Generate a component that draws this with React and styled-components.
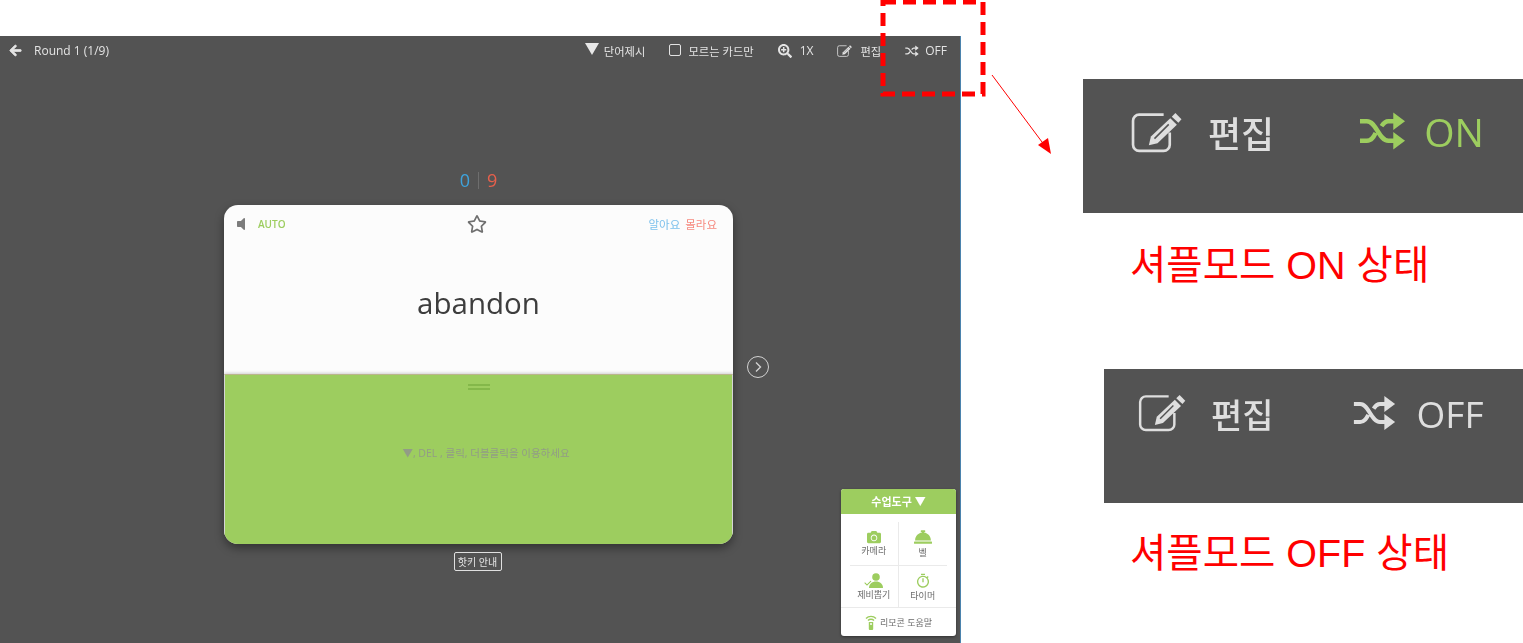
import styled, { createGlobalStyle } from "styled-components";
import { FaArrowLeft, FaCamera, FaConciergeBell, FaRegStar, FaSearchPlus, FaVolumeOff } from "react-icons/fa";
import { MdOutlineTimer } from "react-icons/md";

const GlobalStyle = createGlobalStyle`
  html, body {
    margin: 0;
    padding: 0;
    background: #fff;
  }
  body {
    font-family: "Open Sans", "Noto Sans CJK KR", sans-serif;
  }
`
const Page = styled.div`
  position: relative;
  display: flex;
  width: 1523px;
  height: 643px;
  overflow: hidden;
`
const Screen = styled.div`
  position: relative;
  box-sizing: border-box;
  width: 961px;
  height: 607px;
  margin-top: 36px;
  background: #535353;
  border-right: 1px solid #4b83ad;
  flex-shrink: 0;
  filter: blur(0.3px);
`
const Toolbar = styled.div`
  display: flex;
  justify-content: space-between;
  align-items: center;
  height: 29px;
  padding: 0 13px 0 9px;
  color: #e4e4e4;
  font-size: 12px;
`
const ToolGroup = styled.div`
  display: flex;
  align-items: center;
  gap: ${props => props.$gap}px;
`
const ToolItem = styled.div`
  display: flex;
  align-items: center;
  gap: ${props => props.$gap || 8}px;
  white-space: nowrap;
`
const KoreanLabel = styled.span`
  font-size: 11.3px;
`
const BackIcon = styled(FaArrowLeft)`
  stroke: currentColor;
  stroke-width: 30px;
`
const Triangle = styled.span`
  width: 0;
  height: 0;
  margin-top: -3px;
  border-left: 7px solid transparent;
  border-right: 7px solid transparent;
  border-top: 12px solid #e8e8e8;
`
const CheckBox = styled.span`
  box-sizing: border-box;
  width: 12px;
  height: 12px;
  margin-top: -2px;
  border: 1px solid #e4e4e4;
  border-radius: 2px;
`
const Stage = styled.div`
  display: flex;
  align-items: flex-start;
  gap: 14px;
  padding: 103px 0 0 224px;
`
const CardColumn = styled.div`
  display: flex;
  flex-direction: column;
  align-items: center;
  width: 509px;
`
const Score = styled.div`
  display: flex;
  align-items: center;
  justify-content: center;
  gap: 8px;
  height: 24px;
  margin-bottom: 13px;
  font-size: 18px;
`
const ScoreNum = styled.span`
  color: ${props => props.$color};
`
const ScoreBar = styled.span`
  width: 1px;
  height: 17px;
  background: #6e6e6e;
`
const Card = styled.div`
  width: 100%;
  height: 339px;
  border-radius: 14px;
  overflow: hidden;
  background: #fcfcfc;
  box-shadow: 0 4px 10px rgba(0, 0, 0, 0.4);
`
const CardTop = styled.div`
  height: 169px;
  padding: 0 16px;
  box-sizing: border-box;
`
const CardHeader = styled.div`
  display: grid;
  grid-template-columns: 1fr auto 1fr;
  align-items: center;
  height: 38px;
`
const HeaderLeft = styled.div`
  display: flex;
  align-items: center;
  gap: 9px;
  margin-left: -7px;
  color: #7c7c7c;
  font-size: 15px;
`
const Auto = styled.span`
  color: #9dcd5f;
  font-size: 10px;
  font-weight: 600;
`
const StarWrap = styled.div`
  display: flex;
  margin-right: 3px;
  color: #6f6f6f;
  font-size: 20px;
`
const Answers = styled.div`
  display: flex;
  justify-content: flex-end;
  gap: 5px;
  font-size: 11.5px;
`
const Answer = styled.span`
  color: ${props => props.$color};
`
const Word = styled.div`
  margin-top: 41px;
  text-align: center;
  color: #3d3d3d;
  font-size: 29.5px;
  line-height: 38px;
`
const CardBottom = styled.div`
  box-sizing: border-box;
  display: flex;
  flex-direction: column;
  align-items: center;
  height: 170px;
  padding-top: 9px;
  background: #9dcd5f;
  border: 1px solid #d5d5d5;
  border-width: 1px 1px 0;
  border-top-color: #bbb58c;
  box-shadow: 0 -1px 3px rgba(0, 0, 0, 0.18);
  position: relative;
`
const Handle = styled.div`
  width: 22px;
  height: 2px;
  border-top: 2px solid #84b84a;
  border-bottom: 2px solid #84b84a;
  margin-bottom: 56px;
`
const HintText = styled.div`
  margin-left: 15px;
  color: #929c86;
  font-size: 10.5px;
  line-height: 14px;
`
const HotkeyButton = styled.button`
  box-sizing: border-box;
  height: 19px;
  width: 48px;
  margin: 8px 2px 0 0;
  padding: 0;
  font: inherit;
  font-size: 10px;
  color: #e6e6e6;
  background: #535353;
  border: 1px solid #e0e0e0;
  border-radius: 2px;
`
const NextButton = styled.div`
  box-sizing: border-box;
  display: flex;
  align-items: center;
  justify-content: center;
  width: 22px;
  height: 22px;
  margin-top: 188px;
  border: 1px solid #d2d2d2;
  border-radius: 50%;
`
const Toolbox = styled.div`
  position: absolute;
  right: 4px;
  bottom: 7px;
  width: 115px;
  height: 147px;
  background: #fff;
  border-radius: 3px;
  overflow: hidden;
  box-shadow: 0 1px 3px rgba(0, 0, 0, 0.4);
`
const ToolboxTitle = styled.div`
  height: 25px;
  line-height: 25px;
  text-align: center;
  color: #fff;
  background: #9dcd5f;
  font-size: 11px;
  font-weight: 700;
`
const ToolboxGrid = styled.div`
  display: grid;
  grid-template-columns: 1fr 1fr;
  grid-template-rows: 44px 42px;
  margin: 8px 9px 0;
  height: 85px;
`
const ToolCell = styled.div`
  display: flex;
  flex-direction: column;
  align-items: center;
  justify-content: center;
  gap: 1px;
  color: #6b6b6b;
  font-size: 9px;
  line-height: 12px;
  border-right: ${props => props.$right ? "1px solid #eaeaea" : "none"};
  border-bottom: ${props => props.$bottom ? "1px solid #eaeaea" : "none"};
  svg {
    color: #9dcd5f;
  }
`
const ToolboxFooter = styled.div`
  display: flex;
  align-items: center;
  justify-content: center;
  gap: 3px;
  height: 29px;
  border-top: 1px solid #eaeaea;
  color: #6b6b6b;
  font-size: 9px;
`
const Side = styled.div`
  display: flex;
  flex-direction: column;
  flex: 1;
`
const Shot = styled.div`
  box-sizing: border-box;
  display: flex;
  align-items: flex-start;
  height: 134px;
  margin-top: ${props => props.$top}px;
  margin-left: ${props => props.$left}px;
  padding: ${props => props.$pad};
  background: #535353;
  color: #dedede;
  filter: blur(0.6px);
`
const ShotItem = styled.div`
  display: flex;
  align-items: center;
  gap: ${props => props.$gap}px;
  margin-right: ${props => props.$space}px;
  color: ${props => props.$color || "#dedede"};
  font-size: ${props => props.$size}px;
  font-weight: ${props => props.$weight || 400};
  line-height: 1;
`
const ShotLabel = styled.span`
  margin-top: ${props => props.$drop}px;
`
const Note = styled.div`
  margin-top: ${props => props.$top}px;
  margin-left: ${props => props.$left}px;
  color: #ff0000;
  font-family: "Liberation Sans", "Noto Sans CJK KR", sans-serif;
  font-size: 39.5px;
  line-height: 50px;
  white-space: nowrap;
`
const DashedBox = styled.svg`
  position: absolute;
  left: 880px;
  top: 0;
`
const Pointer = styled.svg`
  position: absolute;
  left: 985px;
  top: 70px;
`

const EditIcon = ({width, height}) => (
    <svg width={width} height={height} viewBox="0 0 50 40" fill="none">
        <path d="M32 2.500H8a6 6 0 0 0-6 6V32a6 6 0 0 0 6 6h24a6 6 0 0 0 6-6V20" stroke="currentColor" strokeWidth="2.600"/>
        <path d="M43.500 1l6 6-3 3.500-6.500-6z" fill="currentColor"/>
        <path d="M38.500 6l6.500 6.500-19 18-8.500 2 2-8.500z" fill="currentColor"/>
        <path d="M37 12L23 26" stroke="#535353" strokeWidth="1.500"/>
    </svg>
)

const ShuffleIcon = ({width, height}) => (
    <svg width={width} height={height} viewBox="0 0 48 40" fill="none">
        <path d="M1 10h7c10 0 12 20 22 20h6M1 30h7c5 0 7-4 9-8M23 15c2-3 4-5 7-5h6" stroke="currentColor" strokeWidth="4.500"/>
        <path d="M35 1l12 9-12 9zM35 21l12 9-12 9z" fill="currentColor"/>
    </svg>
)

const RemoteIcon = () => (
    <svg width="12" height="15" viewBox="0 0 12 15" fill="none">
        <path d="M1 3.500a7 7 0 0 1 10 0" stroke="#9dcd5f" strokeWidth="1.400"/>
        <path d="M3 5.500a4.200 4.200 0 0 1 6 0" stroke="#9dcd5f" strokeWidth="1.400"/>
        <path d="M3.800 7h4.400v7a1 1 0 0 1-1 1H4.800a1 1 0 0 1-1-1z" fill="#9dcd5f"/>
        <circle cx="6" cy="9" r="1" fill="#fff"/>
    </svg>
)

const PickIcon = () => (
    <svg width="20" height="15" viewBox="0 0 20 15" fill="#9dcd5f">
        <circle cx="12" cy="4" r="3.800"/>
        <path d="M5 15c0-4 3-6.500 7-6.500s7 2.500 7 6.500z"/>
        <path d="M0 10l1-1 2 2 3.500-3.500 1 1L3 13z" stroke="#fff" strokeWidth="0.500"/>
    </svg>
)

const App = () => {
    return (
        <Page>
            <GlobalStyle/>
            <Screen>
                <Toolbar>
                    <ToolItem $gap={12}>
                        <BackIcon size={13}/>
                        <span>Round 1 (1/9)</span>
                    </ToolItem>
                    <ToolGroup $gap={24}>
                        <ToolItem $gap={5}><Triangle/><KoreanLabel>단어제시</KoreanLabel></ToolItem>
                        <ToolItem $gap={7}><CheckBox/><KoreanLabel>모르는 카드만</KoreanLabel></ToolItem>
                        <ToolItem><FaSearchPlus size={14}/><span>1X</span></ToolItem>
                        <ToolItem $gap={8}><EditIcon width={15} height={12}/><KoreanLabel>편집</KoreanLabel></ToolItem>
                        <ToolItem $gap={6}><ShuffleIcon width={14} height={12}/><span>OFF</span></ToolItem>
                    </ToolGroup>
                </Toolbar>
                <Stage>
                    <CardColumn>
                        <Score>
                            <ScoreNum $color="#3ea3dc">0</ScoreNum>
                            <ScoreBar/>
                            <ScoreNum $color="#e7604c">9</ScoreNum>
                        </Score>
                        <Card>
                            <CardTop>
                                <CardHeader>
                                    <HeaderLeft>
                                        <FaVolumeOff size={16}/>
                                        <Auto>AUTO</Auto>
                                    </HeaderLeft>
                                    <StarWrap><FaRegStar/></StarWrap>
                                    <Answers>
                                        <Answer $color="#7cc0ec">알아요</Answer>
                                        <Answer $color="#f68a80">몰라요</Answer>
                                    </Answers>
                                </CardHeader>
                                <Word>abandon</Word>
                            </CardTop>
                            <CardBottom>
                                <Handle/>
                                <HintText>▼, DEL , 클릭, 더블클릭을 이용하세요</HintText>
                            </CardBottom>
                        </Card>
                        <HotkeyButton>핫키 안내</HotkeyButton>
                    </CardColumn>
                    <NextButton>
                        <svg width="10" height="12" viewBox="0 0 10 12" fill="none">
                            <path d="M3 1.500L7.500 6 3 10.500" stroke="#d2d2d2" strokeWidth="1.400"/>
                        </svg>
                    </NextButton>
                </Stage>
                <Toolbox>
                    <ToolboxTitle>수업도구 ▼</ToolboxTitle>
                    <ToolboxGrid>
                        <ToolCell $right $bottom><FaCamera size={14}/><span>카메라</span></ToolCell>
                        <ToolCell $bottom><FaConciergeBell size={18}/><span>벨</span></ToolCell>
                        <ToolCell $right><PickIcon/><span>제비뽑기</span></ToolCell>
                        <ToolCell><MdOutlineTimer size={16}/><span>타이머</span></ToolCell>
                    </ToolboxGrid>
                    <ToolboxFooter><RemoteIcon/><span>리모콘 도움말</span></ToolboxFooter>
                </Toolbox>
            </Screen>
            <Side>
                <Shot $top={79} $left={122} $pad="32px 0 0 48px">
                    <ShotItem $gap={26} $space={85} $size={36} $weight={500}><EditIcon width={51} height={41}/><ShotLabel $drop={6}>편집</ShotLabel></ShotItem>
                    <ShotItem $gap={18} $space={0} $size={39} $color="#9dcd5f"><ShuffleIcon width={47} height={40}/><span>ON</span></ShotItem>
                </Shot>
                <Note $top={27} $left={169}>셔플모드 ON 상태</Note>
                <Shot $top={79} $left={143} $pad="25px 0 0 34px">
                    <ShotItem $gap={25} $space={79} $size={34} $weight={500}><EditIcon width={48} height={38}/><ShotLabel $drop={4}>편집</ShotLabel></ShotItem>
                    <ShotItem $gap={21} $space={0} $size={37}><ShuffleIcon width={43} height={38}/><span>OFF</span></ShotItem>
                </Shot>
                <Note $top={25} $left={169}>셔플모드 OFF 상태</Note>
            </Side>
            <DashedBox width="106" height="98" viewBox="0 0 106 98" fill="none">
                <rect x="3" y="2" width="100" height="92" stroke="#ff0000" strokeWidth="5" strokeDasharray="13 7"/>
            </DashedBox>
            <Pointer width="70" height="90" viewBox="0 0 70 90" fill="none">
                <path d="M7 5L60 76" stroke="#ff0000" strokeWidth="1"/>
                <path d="M66 84L53 75 63 68z" fill="#ff0000"/>
            </Pointer>
        </Page>
    )
}

export default App;
